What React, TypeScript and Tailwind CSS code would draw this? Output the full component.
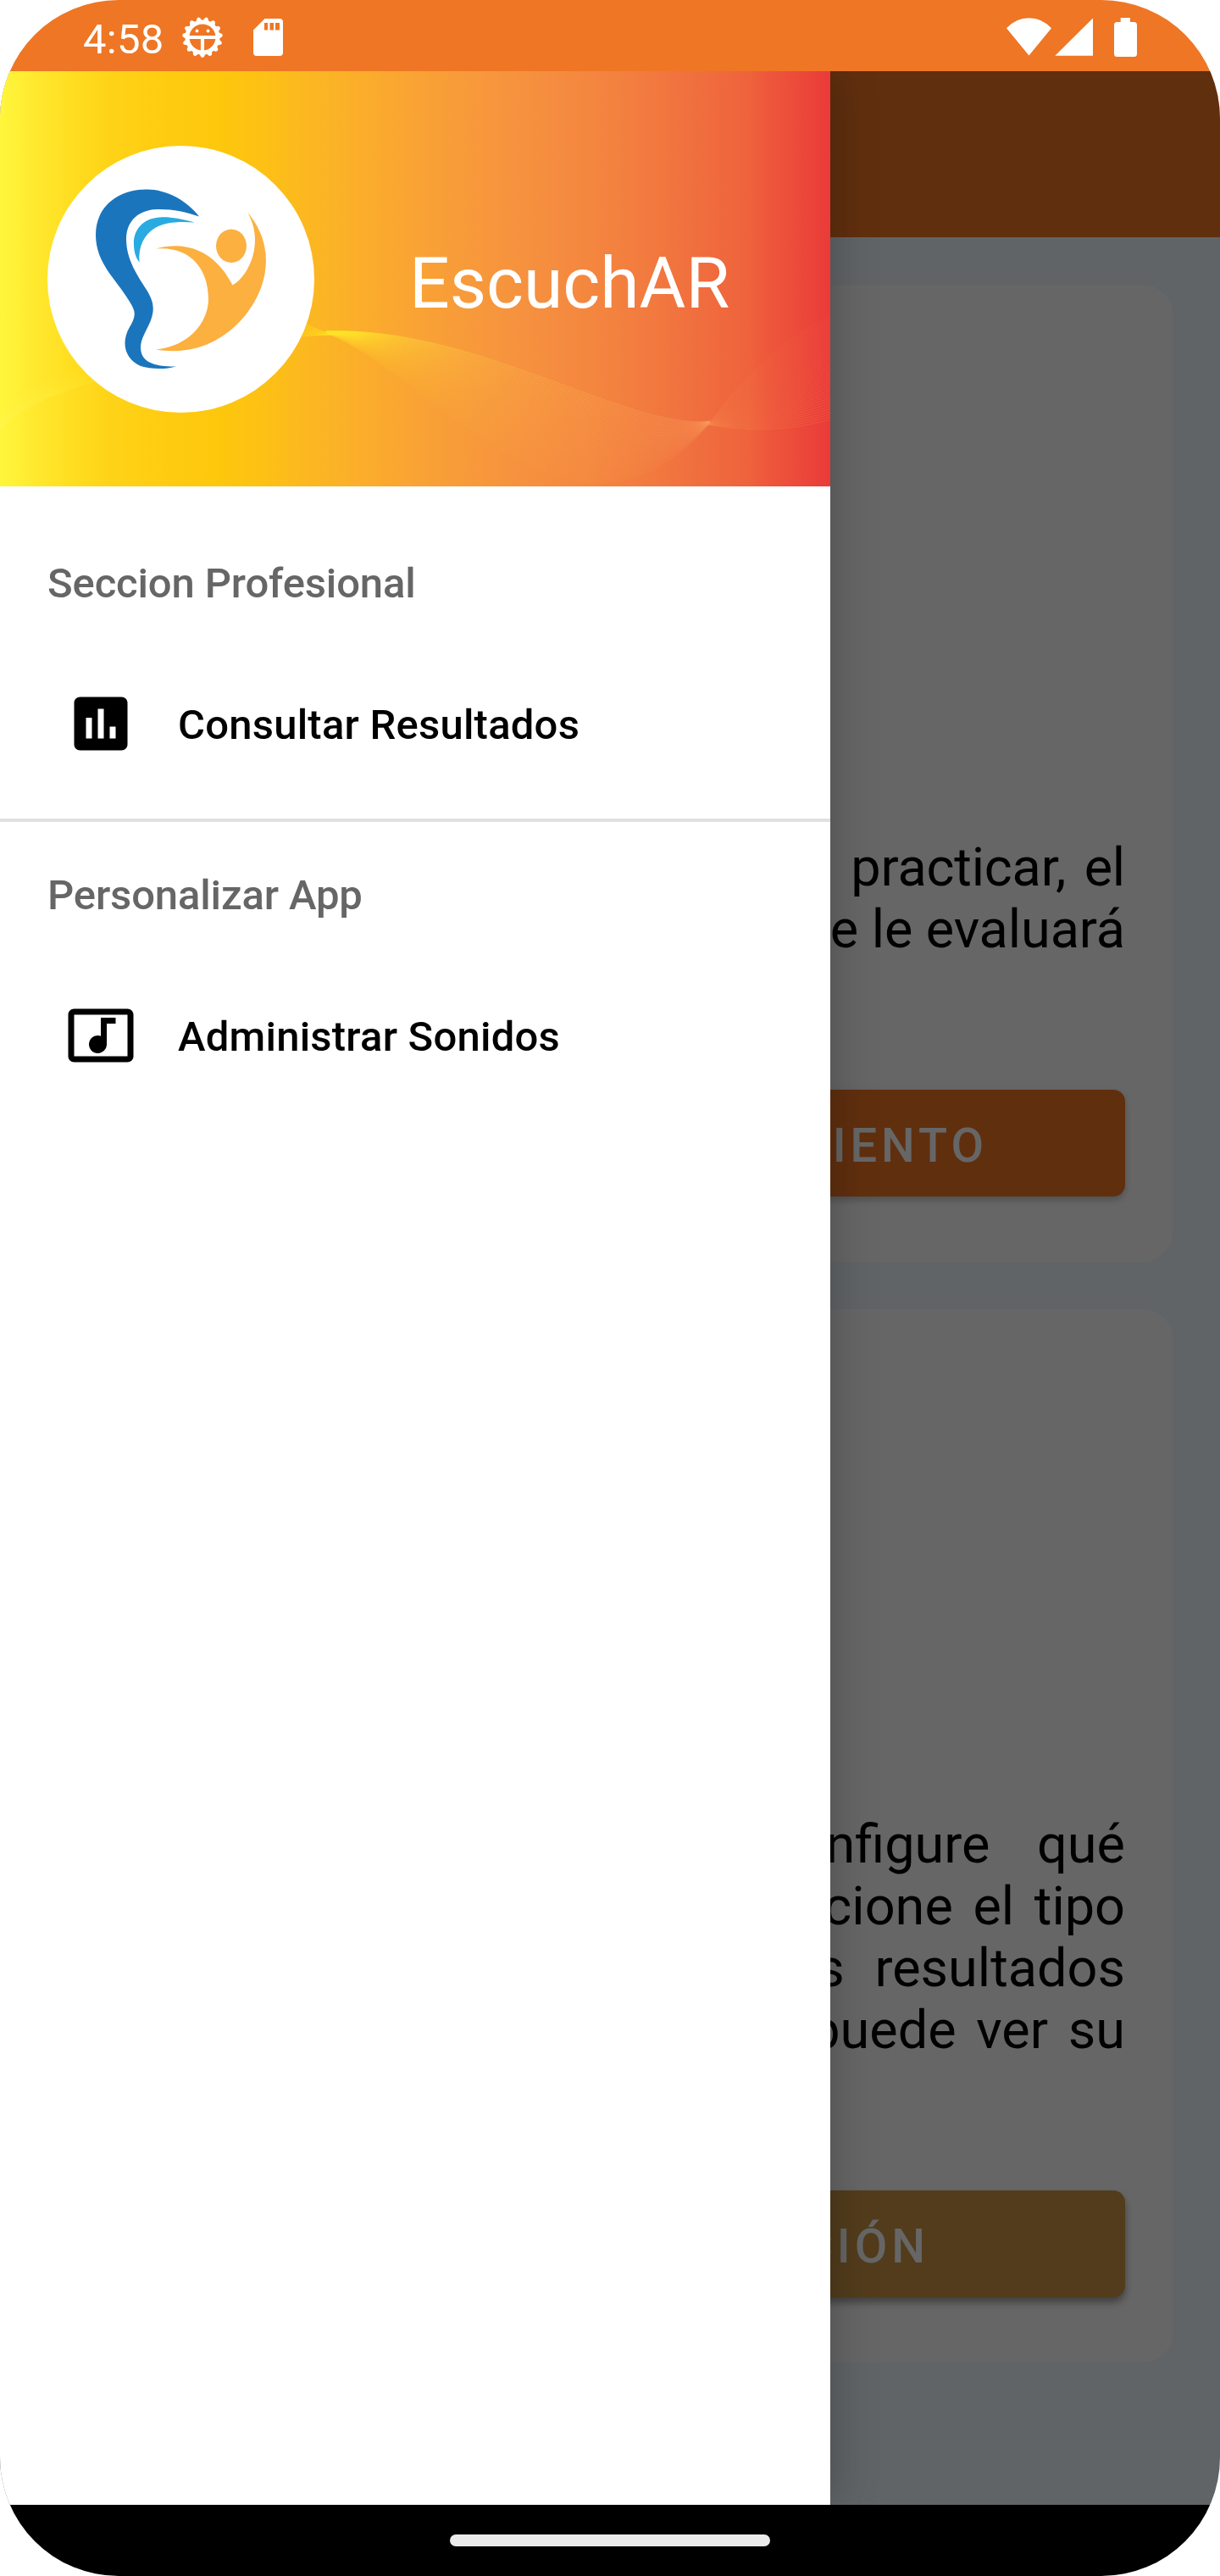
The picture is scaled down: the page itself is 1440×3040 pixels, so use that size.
import React from "react";

const HEADER_STOPS: [number, string][] = [
  [0, "#fff63c"], [40, "#ffe92f"], [90, "#ffdc1f"], [130, "#fed317"], [200, "#ffcb10"], [260, "#fdc70c"],
  [315, "#fdc016"], [380, "#fbb524"], [430, "#fbad2b"], [490, "#f9a334"], [560, "#f7993b"], [620, "#f6913f"],
  [700, "#f4863f"], [760, "#f27b3f"], [830, "#f06d3e"], [885, "#ef623c"], [905, "#ee573b"], [940, "#ec4b3a"], [980, "#ea3a39"],
];

type Pt = [number, number];
type Curve = [Pt, Pt, Pt, Pt];

/* Lines interpolated between two boundary cubics. */
function fan(a: Curve, b: Curve, n: number) {
  return Array.from({ length: n }, (_, i) => {
    const t = i / (n - 1);
    const p = a.map((q, k) => [q[0] + (b[k][0] - q[0]) * t, q[1] + (b[k][1] - q[1]) * t]);
    return `M${p[0]}C${p[1]} ${p[2]} ${p[3]}`;
  });
}

const LEFT = fan([[-4, 429], [14, 400], [56, 382], [125, 362]], [[-4, 412], [20, 374], [60, 352], [125, 350]], 16);
const EDGE = fan([[350, 290], [366, 303], [382, 309], [405, 311]], [[350, 314], [362, 312], [376, 312], [388, 311]], 12);
const MIDDLE = fan(
  [[385, 307], [560, 300], [740, 424], [838, 413]],
  [[385, 309], [520, 364], [680, 602], [838, 415]],
  46,
);
const RIGHT = fan([[836, 417], [870, 372], [905, 328], [984, 286]], [[836, 417], [880, 426], [930, 425], [984, 410]], 40);

function HeaderBackground() {
  return (
    <svg className="absolute inset-0 h-full w-full" viewBox="0 0 980 490" fill="none">
      <defs>
        <linearGradient id="sun">
          {HEADER_STOPS.map(([x, c]) => (
            <stop key={x} offset={x / 980} stopColor={c} />
          ))}
        </linearGradient>
        <linearGradient id="strand" gradientUnits="userSpaceOnUse" x1="370" y1="0" x2="850" y2="0">
          <stop offset="0" stopColor="#ffe628" stopOpacity="0.35" />
          <stop offset="0.1" stopColor="#ffe628" stopOpacity="0.65" />
          <stop offset="0.22" stopColor="#ffd434" stopOpacity="0.6" />
          <stop offset="0.45" stopColor="#fec445" stopOpacity="0.5" />
          <stop offset="0.75" stopColor="#fbb258" stopOpacity="0.4" />
          <stop offset="1" stopColor="#f99c5c" stopOpacity="0.3" />
        </linearGradient>
        <linearGradient id="leftStrand" gradientUnits="userSpaceOnUse" x1="0" y1="0" x2="120" y2="0">
          <stop offset="0" stopColor="#fff65a" stopOpacity="0.5" />
          <stop offset="0.5" stopColor="#fff244" stopOpacity="0.5" />
          <stop offset="1" stopColor="#ffe92a" stopOpacity="0.25" />
        </linearGradient>
      </defs>
      <rect width="980" height="490" fill="url(#sun)" />
      {LEFT.map((d, i) => <path key={d} d={d} stroke="url(#leftStrand)" strokeOpacity={1 - i * 0.06} />)}
      {EDGE.map((d) => <path key={d} d={d} stroke="#ffe51f" strokeOpacity="0.4" />)}
      {MIDDLE.map((d, i) => (
        <path key={d} d={d} stroke="url(#strand)" strokeOpacity={1 - i * 0.018} />
      ))}
      {RIGHT.map((d, i) => <path key={d} d={d} stroke="#f58a50" strokeOpacity={0.14 + i * 0.003} />)}
    </svg>
  );
}

function Logo() {
  return (
    <svg className="relative h-[315px] w-[315px] shrink-0" viewBox="56 172 315 315">
      <circle cx="213.5" cy="329.5" r="157.5" fill="#fff" />
      <path
        fill="#1b75bc"
        d="M235 255.500C221 237 197 223.500 173 223.500C138 223.500 113 245 113 277C113 311 137 329 153 356C159 366 162 371 153 386C142 405 148 424 166 432C178 436 196 436 208 432.500C187 433 171 429 167 417C163 403 172 393 178 378C183 364 181 355 173 342C163 326 149 307 149 282C149 262 162 248 185 247C203 246.500 219 250 235 255.500Z"
      />
      <path fill="#29abe2" d="M230 262.500C211 257.500 199 255.500 188 256.500C168 258 157 272 158 289C158 298 161 305 164.500 309.500C163 291 170 277 183 269C195 262 211 261 230 262.500Z" />
      <g fill="#fbb040">
        <path d="M184 293.500C226 282 257 302 274.500 336.500C293 327 313 286 292 250.500C314 276 319 307 309 337C293 383 246 423 184 412.500C222 409 246 381 246 353C246 316 223 290 184 293.500Z" />
        <ellipse cx="273" cy="290.300" rx="18" ry="19.700" />
      </g>
    </svg>
  );
}

function GearIcon() {
  const teeth = Array.from({ length: 15 }, (_, i) => 90 + i * 24);
  return (
    <svg className="h-[50px] w-[50px]" viewBox="-25 -25 50 50">
      <circle r="18" fill="none" stroke="#fff" strokeWidth="5" />
      {teeth.map((a) => (
        <path key={a} transform={`rotate(${a})`} d="M18 -4.500L23 -1.800Q24.800 0 23 1.800L18 4.500Z" fill="#fff" />
      ))}
      <path d="M-16.500 0H16.500M0 0V17" stroke="#fff" strokeWidth="4.200" />
      <circle cx="-6.500" cy="-7.500" r="1.900" fill="#fff" />
      <circle cx="6.500" cy="-7.500" r="1.900" fill="#fff" />
    </svg>
  );
}

function StatusBar() {
  return (
    <header className="flex h-[84px] items-start justify-between bg-[#ef7624] pr-[98px] pl-[98px] text-white">
      <div className="flex items-start">
        <span className="mt-[18px] w-[116px] text-[49px] leading-[57px] tracking-[0.3px]">4:58</span>
        <div className="mt-[19px]"><GearIcon /></div>
        <svg className="mt-[22px] ml-[35px] h-[44px] w-[35px]" viewBox="0 0 35 44" fill="#fff">
          <path fillRule="evenodd" d="M13.500 0H31Q35 0 35 4V40Q35 44 31 44H4Q0 44 0 40V13.500ZM13 5V13.500H17V5ZM19.500 5V13.500H24V5ZM26 5V13.500H31V5Z" />
        </svg>
      </div>
      <svg className="mt-[21px] h-[46px] w-[154px]" viewBox="1188 21 154 46" fill="#fff">
        <path d="M1188 33.300Q1199 21.300 1214.500 21.300T1241 33.300L1214.500 65.500Z" />
        <path d="M1290 21.500V65.800H1245.300Z" />
        <path d="M1322.700 21H1334V26H1338.500Q1342 26 1342 29.500V63.500Q1342 67 1338.500 67H1318.500Q1315 67 1315 63.500V29.500Q1315 26 1318.500 26H1322.700Z" />
      </svg>
    </header>
  );
}

function DrawerItem({ label, path }: { label: string; path: string }) {
  return (
    <a className="flex h-[168px] items-center pl-[77px] text-[49px] font-medium tracking-[0.22px] text-black">
      <svg className="h-[84px] w-[84px]" viewBox="0 0 24 24"><path d={path} /></svg>
      <span className="mt-[4px] ml-[49px]">{label}</span>
    </a>
  );
}

function SectionTitle({ children }: { children: string }) {
  return <h2 className="pl-[56px] text-[49px] leading-[58px] font-medium tracking-[-0.14px] text-[#666]">{children}</h2>;
}

function Drawer() {
  return (
    <aside className="absolute inset-y-0 left-0 w-[980px] bg-white shadow-[0_0_50px_rgba(0,0,0,0.26)]">
      <div className="relative flex h-[490px] items-center pl-[56px]">
        <HeaderBackground />
        <Logo />
        <h1 className="relative ml-[112px] pt-[12px] text-[84px] leading-[98px] text-white">EscuchAR</h1>
      </div>
      <nav className="pt-[86px]">
        <SectionTitle>Seccion Profesional</SectionTitle>
        <div className="pt-[52px]">
          <DrawerItem label="Consultar Resultados" path="M19 3H5c-1.100 0-2 .9-2 2v14c0 1.100.9 2 2 2h14c1.100 0 2-.9 2-2V5c0-1.100-.9-2-2-2zM9 17H7v-7h2v7zm4 0h-2V7h2v10zm4 0h-2v-4h2v4z" />
        </div>
        <div className="mt-[28px] h-[4px] bg-[#e0e0e0]" />
        <div className="pt-[58px]">
          <SectionTitle>Personalizar App</SectionTitle>
        </div>
        <div className="pt-[52px]">
          <DrawerItem label="Administrar Sonidos" path="M21 3H3c-1.100 0-2 .9-2 2v14c0 1.100.9 2 2 2h18c1.100 0 2-.9 2-2V5c0-1.100-.9-2-2-2zm0 16H3V5h18v14zM8 15c0-1.660 1.340-3 3-3 .35 0 .69.070 1 .180V6h5v2h-3v7.030c-.020 1.640-1.350 2.970-3 2.970-1.660 0-3-1.340-3-3z" />
        </div>
      </nav>
    </aside>
  );
}

function Content() {
  return (
    <div className="flex h-full flex-col bg-[#f0faff]">
      <div className="h-[196px] shrink-0 bg-[#ef7624]" />
      <div className="flex flex-col gap-[56px] px-[56px] pt-[56px]">
        <section className="h-[1153px] rounded-[35px] bg-white px-[56px] pt-[651px]">
          <div className="flex h-[299px] flex-col items-end text-right text-[63px] leading-[73px] whitespace-nowrap text-black">
            <p className="tracking-[-0.2px] [word-spacing:6px]">practicar, el</p>
            <p className="tracking-[-0.1px]">que le evaluará</p>
          </div>
          <div className="flex h-[126px] items-center justify-end rounded-[14px] bg-[#ef7624] pt-[5px] pr-[162px] text-[56px] font-medium tracking-[5px] text-white shadow-[0_4px_8px_rgba(0,0,0,0.24)]">COMENZAR ENTRENAMIENTO</div>
        </section>
        <section className="h-[1243px] rounded-[35px] bg-white px-[56px] pt-[595px]">
          <div className="flex h-[445px] flex-col items-end text-right text-[63px] leading-[73px] whitespace-nowrap text-black">
            <p className="[word-spacing:40px]">configure qué</p>
            <p className="[word-spacing:8px]">seleccione el tipo</p>
            <p className="[word-spacing:20px]">los resultados</p>
            <p className="[word-spacing:8px]">puede ver su</p>
          </div>
          <div className="flex h-[126px] items-center justify-end rounded-[14px] bg-[#cd9646] pt-[5px] pr-[231px] text-[56px] font-medium tracking-[5px] text-white shadow-[0_6px_10px_rgba(0,0,0,0.38)]">COMENZAR EVALUACIÓN</div>
        </section>
      </div>
    </div>
  );
}

export default function App() {
  return (
    <div className="bg-white">
      <div className="flex h-[3040px] w-[1440px] flex-col overflow-hidden rounded-[140px] font-['Roboto',sans-serif]">
        <StatusBar />
        <main className="relative h-[2872px] overflow-hidden">
          <Content />
          <div className="absolute inset-0 bg-black/60" />
          <Drawer />
        </main>
        <footer className="flex h-[84px] items-center justify-center bg-black">
          <div className="h-[14px] w-[378px] rounded-[7px] bg-[#ebebeb]" />
        </footer>
      </div>
    </div>
  );
}
